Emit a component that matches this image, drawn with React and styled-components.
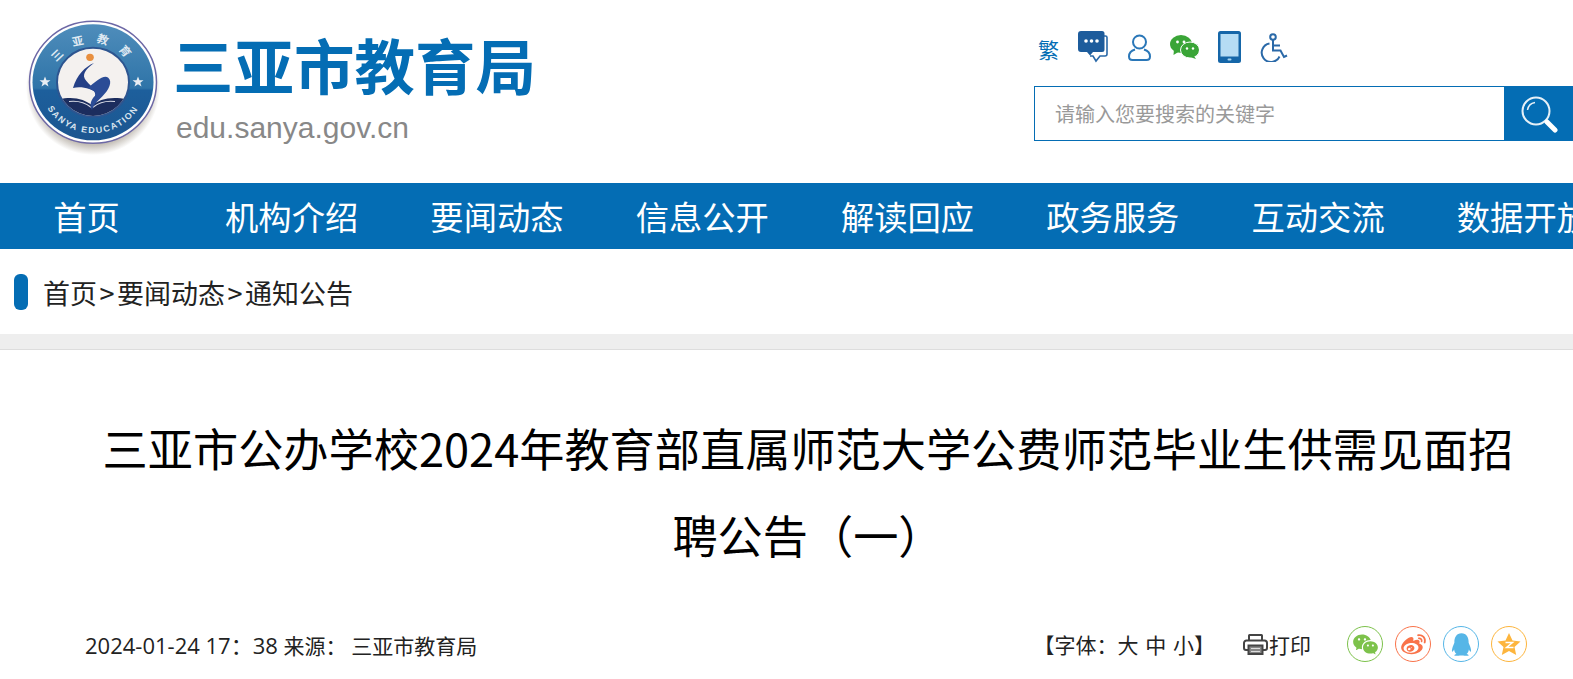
import React from "react";
import styled, { createGlobalStyle } from "styled-components";
import { RiWechatFill, RiWeiboFill, RiQqFill } from "react-icons/ri";

const CJK = `"Noto Sans CJK SC", "Liberation Sans", sans-serif`;
const BLUE = "#046db4";

const NAV_ITEMS = ["首页", "机构介绍", "要闻动态", "信息公开", "解读回应", "政务服务", "互动交流", "数据开放"];

const GlobalStyle = createGlobalStyle`
  html, body {
    margin: 0;
    padding: 0;
    background: #fff;
    overflow: hidden;
    font-family: ${CJK};
  }
`;

const Logo = () => (
  <LogoSvg viewBox="0 0 140 140" role="img">
    <defs>
      <linearGradient id="disc" x1="0" y1="0" x2="0" y2="1">
        <stop offset="0" stopColor="#4f8dbb" />
        <stop offset="0.55" stopColor="#2f74a8" />
        <stop offset="0.57" stopColor="#1d5f9c" />
        <stop offset="1" stopColor="#1c5690" />
      </linearGradient>
      <radialGradient id="shadow" cx="0.5" cy="0.5" r="0.5">
        <stop offset="0.85" stopColor="#8a7f70" stopOpacity="0.5" />
        <stop offset="1" stopColor="#8a7f70" stopOpacity="0" />
      </radialGradient>
      <path id="arcTop" d="M 29 68 A 41 41 0 0 1 111 68" />
      <path id="arcBottom" d="M 17 68 A 53 53 0 0 0 123 68" />
      <clipPath id="inner">
        <circle cx="70" cy="68" r="35" />
      </clipPath>
    </defs>
    <circle cx="70" cy="71" r="67" fill="url(#shadow)" />
    <g transform="scale(1 .96)">
      <circle cx="70" cy="68" r="63.5" fill="#fff" stroke="#6d68a6" strokeWidth="1.5" />
      <circle cx="70" cy="68" r="60.5" fill="url(#disc)" />
      <text fontSize="11.5" fontWeight="700" fill="#dfe9f2" fontFamily={CJK} letterSpacing="11.5" textAnchor="middle">
        <textPath href="#arcTop" startOffset="52%">三亚教育</textPath>
      </text>
      <text fontSize="9" fontWeight="700" fill="#d9e4ee" fontFamily={`"Liberation Sans", sans-serif`} letterSpacing="1.6" textAnchor="middle">
        <textPath href="#arcBottom" startOffset="50%">SANYA EDUCATION</textPath>
      </text>
      <polygon points="22,62 23.500,66 27.500,66 24.300,68.600 25.500,72.500 22,70 18.500,72.500 19.700,68.600 16.500,66 20.500,66" fill="#e8eef3" />
      <polygon points="115,62 116.500,66 120.500,66 117.300,68.600 118.500,72.500 115,70 111.500,72.500 112.700,68.600 109.500,66 113.500,66" fill="#e8eef3" />
      <circle cx="70" cy="68" r="36" fill="#f4f1ef" stroke="#2d5590" strokeWidth="2" />
      <g clipPath="url(#inner)">
        <path d="M36 86 C50 82 62 86 69 92 C76 86 88 82 104 86 L104 104 L36 104 Z" fill="#1c2d5e" />
        <path d="M46 88 C54 87 62 89 68 94 M92 88 C84 87 76 89 70 94" stroke="#d8dbe6" strokeWidth="1.200" fill="none" />
      </g>
      <circle cx="67" cy="42" r="3.800" fill="#e88f3f" />
      <path d="M71 48 C62 52 54 60 50 74 C58 72 68 74 76 81 C72 74 62 68 61 62 C61 56 66 52 71 48 Z" fill="#243f86" />
      <path d="M65 74 C72 68 80 60 85 63 C90 67 86 76 79 83 C74 88 70 92 69 97 C66 92 68 86 72 82 C73 78 70 76 65 74 Z" fill="#2b4c96" />
    </g>
  </LogoSvg>
);

const ChatIcon = () => (
  <TopIcon width="30" height="32" viewBox="0 0 30 32">
    <path d="M26 5h1.500a1.500 1.500 0 0 1 1.500 1.500V23a2 2 0 0 1-2 2h-5l-4 5-3-5h-3" fill="none" stroke="#2a69a8" strokeWidth="1.600" />
    <path d="M3 0h21a2.500 2.500 0 0 1 2.500 2.500v16a2.500 2.500 0 0 1-2.500 2.500H15l-3 3.500L9 21H3a3 3 0 0 1-3-3V3a3 3 0 0 1 3-3z" fill="#1d5c9c" />
    <circle cx="8" cy="10" r="1.800" fill="#fff" />
    <circle cx="13.500" cy="10" r="1.800" fill="#fff" />
    <circle cx="19" cy="10" r="1.800" fill="#fff" />
  </TopIcon>
);

const UserIcon = () => (
  <TopIcon width="23" height="27" viewBox="0 0 23 27" fill="none" stroke="#2a77b8" strokeWidth="2">
    <circle cx="11.500" cy="8" r="6.500" />
    <path d="M7 15.500C3.500 16.500 1 19 1 22.500 1 24.500 2.500 26 4.500 26h14c2 0 3.500-1.500 3.500-3.500 0-3.500-2.500-6-6-7" />
  </TopIcon>
);

const WeChatGreen = () => (
  <TopIcon width="29" height="24" viewBox="0 0 29 24">
    <ellipse cx="11" cy="9" rx="11" ry="9" fill="#3aa537" />
    <path d="M4 14 L3.500 20 L10 16 Z" fill="#3aa537" />
    <ellipse cx="20" cy="15" rx="9.500" ry="8" fill="#3aa537" stroke="#fff" strokeWidth="1" />
    <path d="M24 21 L26 24 L20 22 Z" fill="#3aa537" />
    <circle cx="7.500" cy="7" r="1.400" fill="#fff" />
    <circle cx="14" cy="7" r="1.400" fill="#fff" />
    <circle cx="17" cy="13.500" r="1.200" fill="#fff" />
    <circle cx="23" cy="13.500" r="1.200" fill="#fff" />
  </TopIcon>
);

const PhoneIcon = () => (
  <TopIcon width="23" height="32" viewBox="0 0 23 32">
    <rect width="23" height="32" rx="2.500" fill="#1566a8" />
    <rect x="2.500" y="3" width="18" height="22.500" fill="#b5dcf4" />
    <rect x="9.500" y="27.500" width="4" height="2" rx="1" fill="#a9d6f2" />
  </TopIcon>
);

const WheelchairIcon = () => (
  <TopIcon width="28" height="29" viewBox="0 0 28 29" fill="none" stroke="#2a69a8" strokeWidth="2">
    <circle cx="13" cy="4" r="2.800" />
    <path d="M13 7v10.500h7.500l3.500 6.500 3-1.500" />
    <path d="M13 12.500h7" />
    <path d="M9.500 10.500A9.300 9.300 0 1 0 19.500 23.500" />
  </TopIcon>
);

const SearchIcon = () => (
  <svg width="38" height="38" viewBox="0 0 38 38" fill="none">
    <circle cx="16" cy="16" r="13.500" stroke="#e6f0f7" strokeWidth="2" />
    <path d="M7.500 15A9 9 0 0 1 15 7.500" stroke="#e6f0f7" strokeWidth="1.500" />
    <path d="M27 27l8 8" stroke="#fff" strokeWidth="5" strokeLinecap="round" />
  </svg>
);

const PrintIcon = () => (
  <svg width="25" height="21" viewBox="0 0 25 21" fill="none" stroke="#444" strokeWidth="2">
    <path d="M6 6.500V1.500a.5.5 0 0 1 .5-.5h12a.5.5 0 0 1 .5.5v5" />
    <path d="M5 16H3a2 2 0 0 1-2-2V9a2.500 2.500 0 0 1 2.500-2.500h18A2.500 2.500 0 0 1 24 9v5a2 2 0 0 1-2 2h-2" />
    <rect x="5.500" y="11.500" width="14" height="8.500" fill="#888" />
    <path d="M8 14.500h9M8 17.500h9" stroke="#ddd" strokeWidth="1.200" />
  </svg>
);

const QzoneStar = () => (
  <svg width="24" height="24" viewBox="0 0 24 24">
    <polygon points="12,1 15.500,8.500 23.500,9.500 17.500,15 19.200,23 12,19 4.800,23 6.500,15 .5,9.500 8.500,8.500" fill="#fdb53d" />
    <path d="M8.500 10.500h7l-6 5h7" fill="none" stroke="#fff" strokeWidth="1.500" />
  </svg>
);

const App = () => (
  <Page>
    <GlobalStyle />
    <Header>
      <Brand>
        <Logo />
        <BrandText>
          <SiteName>三亚市教育局</SiteName>
          <SiteUrl>edu.sanya.gov.cn</SiteUrl>
        </BrandText>
      </Brand>
      <Tools>
        <ToolIcons>
          <TradChinese>繁</TradChinese>
          <ChatIcon />
          <UserIcon />
          <WeChatGreen />
          <PhoneIcon />
          <WheelchairIcon />
        </ToolIcons>
        <SearchBox>
          <SearchField>
            <Placeholder>请输入您要搜索的关键字</Placeholder>
          </SearchField>
          <SearchButton>
            <SearchIcon />
          </SearchButton>
        </SearchBox>
      </Tools>
    </Header>

    <Nav>
      {NAV_ITEMS.map((item, i) => (
        <NavItem key={item} $first={i === 0}>{item}</NavItem>
      ))}
    </Nav>

    <Breadcrumb>
      <Marker />
      <Crumbs>
        首页<Sep>&gt;</Sep>要闻动态<Sep>&gt;</Sep>通知公告
      </Crumbs>
    </Breadcrumb>
    <Band />

    <Article>
      <Title>三亚市公办学校2024年教育部直属师范大学公费师范毕业生供需见面招聘公告（一）</Title>
      <Meta>
        <Info>
          <DateText>2024-01-24 17：38 </DateText>来源： 三亚市教育局
        </Info>
        <MetaRight>
          <FontSizes>【字体：大 中 小】</FontSizes>
          <Print>
            <PrintIcon />
            打印
          </Print>
          <Shares>
            <ShareCircle $color="#7dc24b"><RiWechatFill size={27} /></ShareCircle>
            <ShareCircle $color="#f9734a"><RiWeiboFill size={27} /></ShareCircle>
            <ShareCircle $color="#56b6e7"><RiQqFill size={27} /></ShareCircle>
            <ShareCircle $color="#fdb53d"><QzoneStar /></ShareCircle>
          </Shares>
        </MetaRight>
      </Meta>
    </Article>
  </Page>
);

const Page = styled.div`
  width: 1573px;
  height: 679px;
  overflow: hidden;
  background: #fff;
`;
const Header = styled.header`
  display: flex;
  justify-content: space-between;
  height: 183px;
`;
const Brand = styled.div`
  display: flex;
  align-items: flex-start;
  padding: 17px 0 0 23px;
  gap: 10px;
`;
const LogoSvg = styled.svg`
  width: 140px;
  height: 140px;
  flex: none;
`;
const BrandText = styled.div`
  display: flex;
  flex-direction: column;
`;
const SiteName = styled.div`
  font-size: 60.500px;
  font-weight: 700;
  line-height: 66px;
  color: ${BLUE};
  margin-top: 14px;
`;
const SiteUrl = styled.div`
  font-family: "Liberation Sans", sans-serif;
  font-size: 30px;
  line-height: 34px;
  color: #888;
  margin-top: 14px;
  margin-left: 3px;
`;
const Tools = styled.div`
  display: flex;
  flex-direction: column;
  width: 539px;
  padding-top: 31px;
`;
const ToolIcons = styled.div`
  display: flex;
  align-items: center;
  height: 32px;
  padding-left: 4px;
  gap: 19.300px;
`;
const TopIcon = styled.svg`
  flex: none;
  display: block;
`;
const TradChinese = styled.span`
  font-size: 21px;
  line-height: 36px;
  padding-top: 3px;
  color: ${BLUE};
`;
const SearchBox = styled.div`
  display: flex;
  height: 55px;
  margin-top: 23px;
`;
const SearchField = styled.div`
  flex: 1;
  display: flex;
  align-items: center;
  border: 1px solid ${BLUE};
  border-right: 0;
  padding-left: 20px;
`;
const Placeholder = styled.span`
  font-size: 20px;
  color: #999;
`;
const SearchButton = styled.div`
  width: 69px;
  display: flex;
  align-items: center;
  justify-content: center;
  background: ${BLUE};
`;
const Nav = styled.nav`
  display: flex;
  height: 66px;
  background: ${BLUE};
  overflow: hidden;
`;
const NavItem = styled.div`
  flex: none;
  box-sizing: border-box;
  width: ${(p) => (p.$first ? "189px" : "205.300px")};
  padding-right: ${(p) => (p.$first ? "16px" : "0")};
  text-align: center;
  color: #fff;
  font-size: 33.300px;
  line-height: 66px;
  white-space: nowrap;
`;
const Breadcrumb = styled.div`
  display: flex;
  align-items: center;
  height: 85px;
  padding-left: 14px;
  gap: 15px;
`;
const Marker = styled.div`
  width: 14px;
  height: 36px;
  border-radius: 6px;
  background: ${BLUE};
`;
const Crumbs = styled.div`
  font-size: 27px;
  line-height: 40px;
  padding-top: 2px;
  color: #222;
`;
const Sep = styled.span`
  margin: 0 2.500px;
`;
const Band = styled.div`
  height: 15px;
  background: #eee;
  border-bottom: 1px solid #ddd;
`;
const Article = styled.main`
  padding: 54px 42px 0 85px;
`;
const Title = styled.h1`
  margin: 0;
  font-size: 45.200px;
  font-weight: 400;
  line-height: 87px;
  text-align: center;
  color: #000;
`;
const Meta = styled.div`
  display: flex;
  justify-content: space-between;
  align-items: center;
  margin-top: 48px;
  margin-right: 4px;
`;
const Info = styled.div`
  font-size: 21px;
  color: #222;
`;
const DateText = styled.span`
  font-family: "Open Sans", "Noto Sans CJK SC", sans-serif;
  font-size: 22px;
`;
const MetaRight = styled.div`
  display: flex;
  align-items: center;
`;
const FontSizes = styled.div`
  font-size: 21px;
  word-spacing: 2px;
  color: #222;
`;
const Print = styled.div`
  display: flex;
  align-items: center;
  gap: 1px;
  margin-left: 28px;
  font-size: 21px;
  color: #222;
`;
const Shares = styled.div`
  display: flex;
  gap: 12px;
  margin-left: 36px;
`;
const ShareCircle = styled.div`
  width: 34px;
  height: 34px;
  border: 1px solid ${(p) => p.$color};
  border-radius: 50%;
  color: ${(p) => p.$color};
  display: flex;
  align-items: center;
  justify-content: center;
`;

export default App;
